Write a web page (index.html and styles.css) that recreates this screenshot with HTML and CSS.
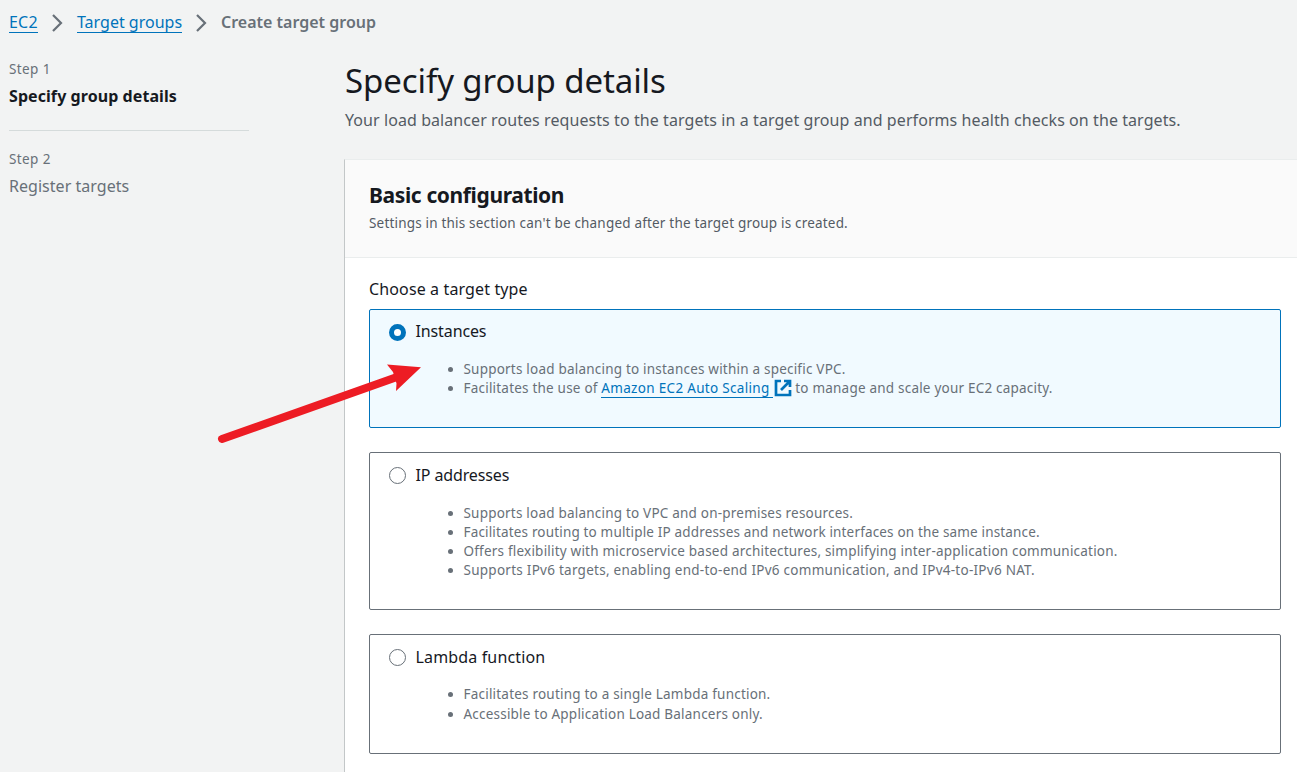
FILE: index.html
```html
<!DOCTYPE html>
<html lang="en">
<head>
<meta charset="utf-8">
<title>Create target group</title>
<link rel="stylesheet" href="styles.css">
</head>
<body>
<nav class="breadcrumbs">
  <a class="crumb crumb-ec2" href="#">EC2</a>
  <svg class="chevron" viewBox="0 0 12 20"><path d="M1 2 9 10 1 18"/></svg>
  <a class="crumb crumb-groups" href="#">Target groups</a>
  <svg class="chevron" viewBox="0 0 12 20"><path d="M1 2 9 10 1 18"/></svg>
  <span class="crumb-current">Create target group</span>
</nav>
<div class="layout">
  <aside class="steps">
    <div class="step step-active">
      <div class="step-label">Step 1</div>
      <div class="step-name">Specify group details</div>
    </div>
    <div class="step">
      <div class="step-label">Step 2</div>
      <div class="step-name">Register targets</div>
    </div>
  </aside>
  <main class="content">
    <h1 class="title">Specify group details</h1>
    <p class="subtitle">Your load balancer routes requests to the targets in a target group and performs health checks on the targets.</p>
    <section class="panel">
      <header class="panel-header">
        <h2 class="panel-title">Basic configuration</h2>
        <p class="panel-note">Settings in this section can't be changed after the target group is created.</p>
      </header>
      <div class="panel-body">
        <div class="field-label">Choose a target type</div>
        <div class="tiles">
          <div class="tile tile-instances tile-selected">
            <div class="tile-head"><span class="radio"></span><span class="tile-name">Instances</span></div>
            <ul class="facts">
              <li>Supports load balancing to instances within a specific VPC.</li>
              <li>Facilitates the use of <a class="link" href="#"><span class="link-text">Amazon EC2 Auto Scaling</span><svg class="external" viewBox="0 0 18 18"><path d="M7 2H2V16H16V11"/><path d="M10 2H16V8M16 2 7 11"/></svg></a> to manage and scale your EC2 capacity.</li>
            </ul>
          </div>
          <div class="tile tile-ip">
            <div class="tile-head"><span class="radio"></span><span class="tile-name">IP addresses</span></div>
            <ul class="facts">
              <li>Supports load balancing to VPC and on-premises resources.</li>
              <li class="snug">Facilitates routing to multiple IP addresses and network interfaces on the same instance.</li>
              <li>Offers flexibility with microservice based architectures, simplifying inter-application communication.</li>
              <li class="loose">Supports IPv6 targets, enabling end-to-end IPv6 communication, and IPv4-to-IPv6 NAT.</li>
            </ul>
          </div>
          <div class="tile tile-lambda">
            <div class="tile-head"><span class="radio"></span><span class="tile-name">Lambda function</span></div>
            <ul class="facts">
              <li>Facilitates routing to a single Lambda function.</li>
              <li>Accessible to Application Load Balancers only.</li>
            </ul>
          </div>
        </div>
      </div>
    </section>
  </main>
</div>
<svg class="arrow" viewBox="0 0 210 84"><path d="M8 77 183 15" stroke="#ed1c24" stroke-width="8" stroke-linecap="round"/><path d="M173 2.500 207 5.300 182 29 182.500 21.500 179 10Z" fill="#ed1c24"/></svg>
</body>
</html>
```
FILE: styles.css
```css
* { box-sizing: border-box; }
body {
  margin: 0;
  height: 772px;
  overflow: hidden;
  position: relative;
  background: #f2f3f3;
  color: #16191f;
  font-family: "Noto Sans", sans-serif;
  font-size: 16px;
}
h1, h2, p, ul { margin: 0; padding: 0; font-weight: 400; }
.breadcrumbs {
  display: flex;
  align-items: center;
  height: 44px;
  padding-left: 9px;
  white-space: nowrap;
  line-height: 20px;
}
.crumb { color: #0073bb; text-decoration: none; border-bottom: 1px solid #0073bb; height: 21px; }
.crumb-ec2 { width: 29px; letter-spacing: 0.2px; }
.crumb-groups { width: 105px; }
.crumb-current { color: #687078; font-weight: 600; }
.chevron { width: 12px; height: 20px; margin: 2px 13px 0 14px; fill: none; stroke: #687078; stroke-width: 2.200; }
.layout { display: flex; }
.steps { width: 240px; margin-left: 9px; padding-top: 15px; flex: none; white-space: nowrap; }
.step { height: 90px; color: #687078; }
.step-active { height: 72px; margin-bottom: 18px; border-bottom: 1px solid #d5dbdb; }
.step-label { font-size: 13.500px; letter-spacing: 0.4px; line-height: 20px; }
.step-name { line-height: 24px; margin-top: 5px; letter-spacing: 0.04px; }
.step-active .step-name { color: #16191f; font-weight: 700; letter-spacing: 0.07px; }
.content { flex: 1; min-width: 0; margin-left: 95px; white-space: nowrap; }
.title { font-size: 33px; letter-spacing: -0.1px; line-height: 44px; padding: 15px 0 0 1px; }
.subtitle { line-height: 24px; letter-spacing: 0.075px; margin: 5px 0 27px 1px; color: #545b64; }
.panel { height: 640px; background: #fff; border-left: 1px solid #c3c7c8; border-top: 1px solid #eaeded; }
.panel-header { height: 98px; background: #fafafa; border-bottom: 1px solid #eaeded; padding: 21px 24px; }
.panel-title { font-size: 21px; letter-spacing: -0.38px; font-weight: 700; line-height: 28px; }
.panel-note { font-size: 13.500px; letter-spacing: 0.19px; line-height: 20px; margin-top: 4px; color: #545b64; }
.panel-body { padding: 19px 16px 0 24px; }
.field-label { line-height: 24px; letter-spacing: 0.13px; }
.tiles { display: flex; flex-direction: column; gap: 24px; margin-top: 8px; }
.tile { border: 1px solid #687078; border-radius: 2px; padding: 10px 0 0 19px; }
.tile-selected { background: #f1faff; border-color: #0073bb; }
.tile-instances { height: 119px; }
.tile-ip { height: 158px; }
.tile-lambda { height: 120px; }
.tile-head { display: flex; align-items: center; gap: 9.500px; height: 24px; line-height: 24px; }
.tile-name { letter-spacing: -0.12px; }
.tile-instances .tile-name { margin-top: -2px; }
.tile-lambda .tile-name { letter-spacing: 0.15px; }
.radio { width: 17px; height: 17px; border: 1px solid #687078; border-radius: 50%; background: #fff; }
.tile-selected .radio { border: 5px solid #0073bb; }
.facts { padding: 16px 0 0 74.500px; font-size: 13.500px; letter-spacing: 0.21px; line-height: 19px; color: #687078; }
.tile-ip .facts { padding-top: 17px; }
.tile-lambda .facts li + li { margin-top: 1px; }
.snug { letter-spacing: 0.165px; }
.loose { letter-spacing: 0.26px; }
.link { color: #0073bb; text-decoration: none; }
.link-text { border-bottom: 1px solid #0073bb; padding-right: 3px; letter-spacing: 0.31px; }
.external { width: 18px; height: 18px; margin-left: 1px; vertical-align: -4px; fill: none; stroke: #0073bb; stroke-width: 2.700; }
.arrow { position: absolute; left: 214px; top: 362px; width: 210px; height: 84px; fill: none; }
```
